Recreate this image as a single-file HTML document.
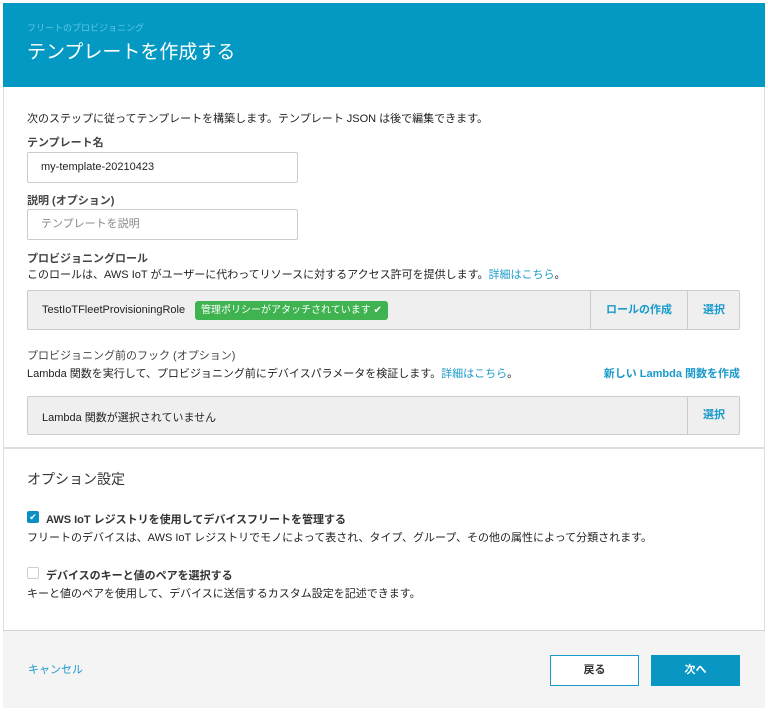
<!DOCTYPE html>
<html><head><meta charset="utf-8"><style>
*{box-sizing:border-box;margin:0;padding:0}
body{width:768px;height:711px;background:#fff;font-family:"Liberation Sans","Noto Sans CJK JP",sans-serif;color:#222;font-size:11px;position:relative;overflow:hidden}
.card{position:absolute;left:3px;top:3px;width:762px;height:705px;border:1px solid #ddd;background:#fff}
.abs{position:absolute;white-space:nowrap}
.hdr{position:absolute;left:3px;top:3px;width:762px;height:84px;background:#0499c2}
.b{font-weight:bold}
.inp{position:absolute;left:27px;width:271px;height:31px;border:1px solid #ccc;border-radius:2px;padding-left:13px;line-height:29px;font-size:11px}
.box{position:absolute;left:27px;width:713px;border:1px solid #ccc;background:#efefef;border-radius:2px}
.link{color:#1a9acb}
.btn{position:absolute;top:655px;height:31px;width:89px;text-align:center;line-height:29px;font-weight:bold;font-size:11px}
</style></head><body>
<div class="card"></div>
<div class="hdr"></div>
<div class="abs" style="left:27px;top:21px;font-size:9px;color:#5fc7e6">フリートのプロビジョニング</div>
<div class="abs" style="left:27px;top:37px;font-size:19px;color:#fff">テンプレートを作成する</div>
<div class="abs" style="left:27px;top:110px">次のステップに従ってテンプレートを構築します。テンプレート JSON は後で編集できます。</div>
<div class="abs b" style="left:27px;top:134px;color:#444">テンプレート名</div>
<div class="inp" style="top:152px">my-template-20210423</div>
<div class="abs b" style="left:27px;top:192px;color:#444">説明 (オプション)</div>
<div class="inp" style="top:209px;color:#888">テンプレートを説明</div>
<div class="abs b" style="left:27px;top:250px;color:#444">プロビジョニングロール</div>
<div class="abs" style="left:27px;top:266px">このロールは、AWS IoT がユーザーに代わってリソースに対するアクセス許可を提供します。<span class="link">詳細はこちら</span>。</div>
<div class="box" style="top:290px;height:40px">
 <div class="abs" style="left:14px;top:13px">TestIoTFleetProvisioningRole</div>
 <div class="abs" style="left:167px;top:10px;height:19px;background:#3fb34f;color:#fff;border-radius:3px;padding:0 6px;line-height:19px;font-size:10px">管理ポリシーがアタッチされています ✔</div>
 <div class="abs" style="left:562px;top:0;height:38px;border-left:1px solid #ccc;width:97px;text-align:center;line-height:38px;font-weight:bold" ><span class="link">ロールの作成</span></div>
 <div class="abs" style="left:659px;top:0;height:38px;border-left:1px solid #ccc;width:53px;text-align:center;line-height:38px;font-weight:bold"><span class="link">選択</span></div>
</div>
<div class="abs" style="left:27px;top:347px;color:#444">プロビジョニング前のフック (オプション)</div>
<div class="abs" style="left:27px;top:365px">Lambda 関数を実行して、プロビジョニング前にデバイスパラメータを検証します。<span class="link">詳細はこちら</span>。</div>
<div class="abs b link" style="right:28px;top:365px">新しい Lambda 関数を作成</div>
<div class="box" style="top:396px;height:39px">
 <div class="abs" style="left:14px;top:12px">Lambda 関数が選択されていません</div>
 <div class="abs" style="left:659px;top:0;height:37px;border-left:1px solid #ccc;width:53px;text-align:center;line-height:37px;font-weight:bold"><span class="link">選択</span></div>
</div>
<div class="abs" style="left:3px;top:447px;width:762px;height:2px;background:#ddd"></div>
<div class="abs" style="left:27px;top:469px;font-size:14px;color:#333">オプション設定</div>
<div class="abs" style="left:27px;top:511px;width:12px;height:12px;background:#0a8fc2;border-radius:2px;color:#fff;font-size:9px;line-height:12px;text-align:center">✔</div>
<div class="abs b" style="left:46px;top:511px;color:#333">AWS IoT レジストリを使用してデバイスフリートを管理する</div>
<div class="abs" style="left:27px;top:529px">フリートのデバイスは、AWS IoT レジストリでモノによって表され、タイプ、グループ、その他の属性によって分類されます。</div>
<div class="abs" style="left:27px;top:567px;width:12px;height:12px;border:1px solid #ccc;border-radius:2px"></div>
<div class="abs b" style="left:46px;top:567px;color:#333">デバイスのキーと値のペアを選択する</div>
<div class="abs" style="left:27px;top:585px">キーと値のペアを使用して、デバイスに送信するカスタム設定を記述できます。</div>
<div class="abs" style="left:3px;top:630px;width:762px;height:78px;background:#f4f4f4;border-top:1px solid #d5d5d5"></div>
<div class="abs link" style="left:28px;top:661px">キャンセル</div>
<div class="btn" style="left:550px;border:1px solid #1a9acb;background:#fff;color:#333">戻る</div>
<div class="btn" style="left:651px;background:#0a96c2;color:#fff;border:1px solid #0a96c2">次へ</div>
</body></html>
